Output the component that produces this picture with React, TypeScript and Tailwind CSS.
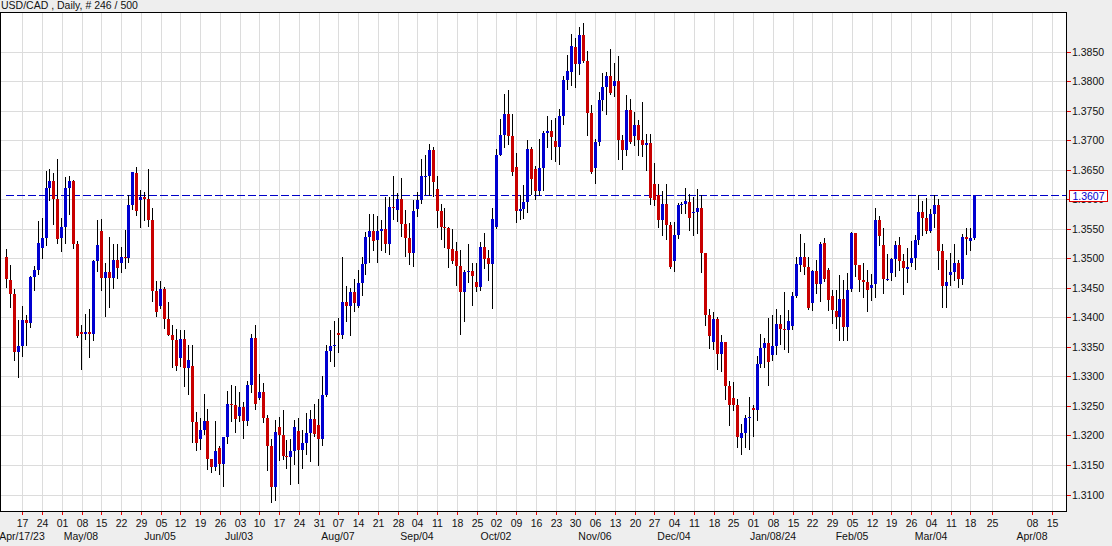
const font = '"Liberation Sans", Arial, sans-serif'

// pixel rows: color, body top, body bottom, wick top, wick bottom
const candles: [string, number, number, number, number][] = [
  ['r',257,279,249,287],['r',280,294,265,307],['r',294,352,289,360],['b',346,352,320,377],['b',320,346,306,356],
  ['r',320,323,315,345],['b',277,323,276,327],['b',270,277,266,290],['b',243,270,221,274],['b',238,248,218,258],
  ['b',188,238,171,245],['b',181,188,169,200],['r',181,199,173,224],['r',199,239,159,243],['b',227,238,218,251],
  ['b',188,227,177,243],['b',181,188,176,214],['r',181,244,180,248],['r',244,336,241,337],['r',332,334,325,369],
  ['b',332,334,314,339],['r',332,334,309,357],['b',261,334,260,340],['b',245,261,220,271],['r',231,278,219,290],
  ['b',272,278,263,316],['r',272,278,237,307],['b',260,278,244,288],['r',260,268,244,278],['b',257,263,247,272],
  ['r',257,258,230,268],['b',205,258,195,262],['b',172,205,172,209],['r',173,211,167,215],['b',197,200,190,227],
  ['r',197,199,192,220],['r',199,220,169,226],['r',220,291,208,301],['r',291,312,281,316],['b',289,306,281,308],
  ['r',289,319,287,328],['r',319,335,302,335],['r',335,340,325,367],['r',340,366,329,370],['b',339,358,330,366],
  ['r',339,368,330,386],['b',360,368,345,394],['r',366,422,345,442],['r',422,443,412,450],['b',430,439,418,449],
  ['b',421,430,394,434],['r',421,459,409,469],['r',459,467,459,472],['b',451,467,421,470],['r',448,464,446,474],
  ['b',437,464,437,486],['b',404,437,391,443],['r',404,405,385,421],['r',405,419,386,432],['b',407,416,392,421],
  ['r',407,421,402,438],['b',385,421,381,425],['b',338,385,334,392],['r',338,404,325,409],['b',392,398,374,399],
  ['r',392,418,383,422],['r',418,446,415,470],['r',446,487,439,502],['b',432,487,420,500],['r',427,435,417,460],
  ['r',435,456,410,459],['r',456,457,440,468],['b',451,457,439,484],['b',427,451,420,464],['r',431,450,418,483],
  ['b',443,450,430,468],['b',433,443,413,454],['b',419,433,410,461],['r',419,434,404,436],['r',425,439,399,465],
  ['b',395,439,376,445],['b',351,395,345,396],['b',346,351,330,361],['b',345,346,321,366],['r',333,335,318,352],
  ['b',302,335,257,338],['r',302,306,286,321],['b',292,306,288,335],['r',292,303,279,311],['b',283,306,270,307],
  ['b',264,283,257,295],['b',237,264,232,274],['b',231,237,214,262],['r',231,241,214,250],['b',231,240,216,262],
  ['b',229,231,220,250],['r',229,244,197,252],['b',207,244,197,254],['r',207,208,176,219],['b',199,210,193,221],
  ['r',199,224,178,236],['r',224,238,210,256],['r',238,253,223,264],['b',211,253,200,266],['b',200,209,192,216],
  ['b',176,200,159,203],['b',176,177,155,194],['b',150,176,144,195],['r',150,182,147,196],['r',189,211,176,227],
  ['r',211,227,204,239],['r',227,228,208,247],['r',228,249,227,267],['r',249,261,229,263],['r',251,266,242,285],
  ['r',266,292,250,334],['b',272,292,270,321],['b',271,272,244,282],['r',271,276,263,305],['r',282,287,263,291],
  ['b',247,287,242,290],['r',247,259,233,268],['r',258,264,250,280],['b',219,264,208,308],['b',155,227,149,228],
  ['b',135,155,119,155],['b',114,135,94,147],['r',114,136,90,144],['r',136,172,114,175],['r',167,211,153,222],
  ['b',209,211,195,219],['b',202,209,185,218],['b',149,202,140,212],['r',149,179,147,194],['r',169,191,166,199],
  ['b',168,191,139,195],['b',133,168,131,190],['b',131,133,116,147],['r',131,137,120,159],['r',141,147,118,161],
  ['b',116,147,109,164],['b',80,116,76,124],['b',71,80,55,89],['b',46,72,34,85],['r',47,64,38,87],
  ['b',35,64,27,74],['r',35,61,23,62],['r',61,113,51,135],['r',113,172,105,173],['b',142,168,139,183],
  ['b',100,142,92,145],['b',87,100,73,110],['b',76,87,72,114],['r',76,93,49,94],['b',81,86,63,96],
  ['r',81,140,56,159],['r',140,150,135,169],['b',110,150,95,155],['r',110,142,99,143],['b',125,136,112,145],
  ['r',125,140,120,155],['r',140,145,102,156],['b',143,145,134,170],['r',143,198,134,204],['r',184,200,163,205],
  ['r',195,220,184,227],['b',204,220,191,235],['r',204,225,184,239],['r',225,267,222,268],['b',235,261,222,271],
  ['b',205,235,203,238],['b',204,205,202,213],['b',201,204,188,213],['r',202,218,194,230],['b',212,213,197,235],
  ['b',208,212,189,233],['r',208,253,195,272],['r',253,315,253,325],['r',315,336,309,348],['b',319,342,312,349],
  ['r',319,354,317,369],['b',342,354,335,371],['r',342,386,342,399],['r',386,405,381,425],['r',398,405,382,410],
  ['r',405,437,399,447],['b',433,438,424,454],['b',418,433,415,447],['b',417,418,397,449],['r',408,410,405,436],
  ['b',364,410,356,420],['b',348,364,334,367],['b',343,348,338,367],['r',343,362,318,385],['b',346,355,315,360],
  ['b',324,346,309,354],['r',324,329,315,344],['r',329,330,292,349],['b',321,330,310,352],['b',296,326,292,329],
  ['b',264,296,257,297],['b',257,265,234,271],['r',257,267,243,274],['r',267,308,257,309],['b',271,303,270,310],
  ['r',271,284,260,293],['b',244,284,242,301],['r',243,279,238,281],['r',270,300,268,310],['r',296,310,290,323],
  ['r',311,317,290,328],['b',299,317,275,340],['r',299,327,280,340],['b',290,327,273,340],['b',233,289,232,291],
  ['r',233,265,233,276],['r',265,280,265,291],['r',280,282,263,297],['r',282,290,270,311],['b',285,288,274,300],
  ['b',220,284,208,297],['r',220,236,216,245],['r',245,279,228,293],['b',279,280,254,280],['b',259,273,258,280],
  ['b',245,259,241,276],['r',245,261,237,270],['r',261,268,254,294],['b',267,269,248,282],['b',258,263,241,266],
  ['b',240,258,235,269],['b',212,240,195,244],['r',212,218,201,235],['r',218,231,198,233],['b',214,231,209,232],
  ['b',205,214,195,227],['r',205,251,199,269],['r',251,286,244,307],['b',282,286,260,307],['b',272,275,253,285],
  ['b',263,272,244,280],['r',263,279,260,287],['b',237,279,234,284],['r',237,239,228,254],['b',238,241,228,250],
  ['b',195,238,195,239],
]

const prices = ['1.3850','1.3800','1.3750','1.3700','1.3650','1.3600','1.3550','1.3500','1.3450','1.3400','1.3350','1.3300','1.3250','1.3200','1.3150','1.3100']
const priceY = [52,81,111,140,170,199,229,258,288,317,347,376,406,435,465,495]

const weeks = ['17','24','01','08','15','22','29','05','12','19','26','03','10','17','24','31','07','14','21','28','04','11','18','25','02','09','16','23','30','06','13','20','27','04','11','18','25','01','08','15','22','29','05','12','19','26','04','11','18']
const dates = [
  ...weeks.map((label, k) => ({ label, x: Math.round(22.3 + k * 19.75) })),
  { label: '25', x: 992 },
  { label: '08', x: 1032 },
  { label: '15', x: 1052 },
]
const months = [
  { label: 'Apr/17/23', x: 22 },
  { label: 'May/08', x: 81 },
  { label: 'Jun/05', x: 160 },
  { label: 'Jul/03', x: 239 },
  { label: 'Aug/07', x: 338 },
  { label: 'Sep/04', x: 417 },
  { label: 'Oct/02', x: 496 },
  { label: 'Nov/06', x: 595 },
  { label: 'Dec/04', x: 674 },
  { label: 'Jan/08/24', x: 773 },
  { label: 'Feb/05', x: 852 },
  { label: 'Mar/04', x: 931 },
  { label: 'Apr/08', x: 1032 },
]

function CandleChart() {
  // svg origin sits inside the 1px border, at page x=1 y=13
  return (
    <svg width={1065} height={498} viewBox="1 13 1065 498" shapeRendering="crispEdges" className="block">
      {dates.map((d) => (
        <rect key={d.x} x={d.x} y={13} width={1} height={498} fill="#dcdcdc" />
      ))}
      {priceY.map((y) => (
        <rect key={y} x={1} y={y} width={1065} height={1} fill="#dcdcdc" />
      ))}
      <line x1={6} x2={1066} y1={195.5} y2={195.5} stroke="#0000c8" strokeDasharray="8 3" />
      {candles.map(([color, top, bottom, high, low], i) => {
        const x = Math.round(6 + i * 3.95)
        return (
          <g key={i}>
            <rect x={x} y={high} width={1} height={low - high + 1} fill="#000" />
            <rect
              x={x - 1}
              y={top}
              width={3}
              height={Math.max(bottom - top, 1)}
              fill={color === 'r' ? '#c80000' : '#0000d0'}
            />
          </g>
        )
      })}
    </svg>
  )
}

export default function App() {
  return (
    <div className="w-[1112px] h-[546px] overflow-hidden bg-[#eeeeee] text-[10.5px] leading-none text-[#111111]" style={{ fontFamily: font }}>
      <div className="h-3 pl-[1px] whitespace-pre text-[10.5px] leading-[11px]">USD/CAD , Daily, # 246 / 500</div>
      <div className="flex h-[500px]">
        <div className="w-[1067px] h-[500px] border border-black bg-white">
          <CandleChart />
        </div>
        <div className="relative flex-1">
          {prices.map((p, i) => (
            <div key={p} className="absolute left-0 flex items-center" style={{ top: priceY[i] - 12 - 5 }}>
              <span className="w-1 h-px bg-[#ee0000]" />
              <span className="ml-px leading-[11px]">{p}</span>
            </div>
          ))}
          <div className="absolute left-[2px] top-[178px] w-[39px] h-3 border border-[#e00000] bg-white text-center leading-[10px] text-[#0000d0]">
            1.3607
          </div>
        </div>
      </div>
      <div className="relative h-[34px]">
        {dates.map((d) => (
          <div key={d.x} className="absolute top-0 flex w-6 -translate-x-1/2 flex-col items-center" style={{ left: d.x + 0.5 }}>
            <span className="w-px h-[3px] bg-[#ee0000]" />
            <span className="mt-[3px] leading-[11px]">{d.label}</span>
          </div>
        ))}
        {months.map((m) => (
          <span key={m.label} className="absolute top-[19px] -translate-x-1/2 whitespace-nowrap leading-[11px]" style={{ left: m.x }}>
            {m.label}
          </span>
        ))}
      </div>
    </div>
  )
}
